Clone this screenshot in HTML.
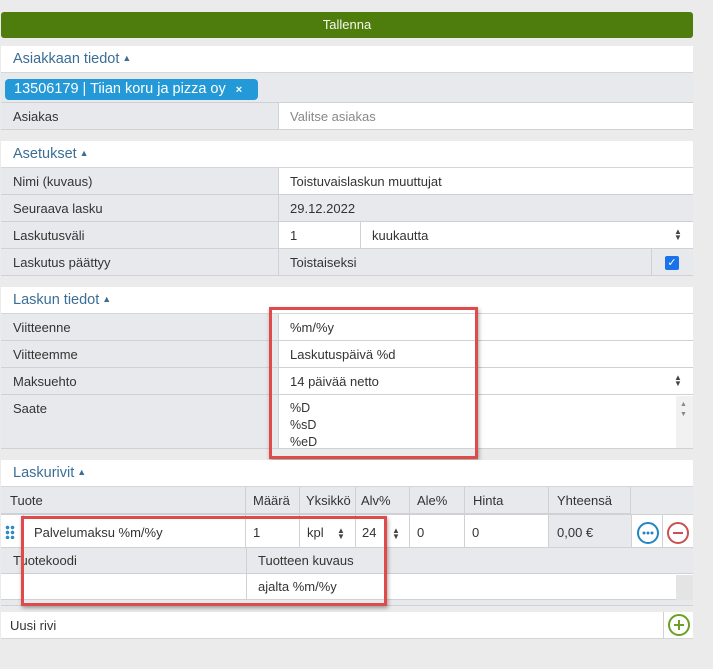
<!DOCTYPE html>
<html><head><meta charset="utf-8"><style>
*{box-sizing:border-box;margin:0;padding:0}
body{width:713px;height:669px;background:#ebebeb;font-family:"Liberation Sans",sans-serif;font-size:13px;color:#333;position:relative;overflow:hidden}
.a{position:absolute}
.btn{left:1px;top:12px;width:692px;height:26px;background:#4f7d0d;border-radius:3px;color:#f4f9e8;text-align:center;line-height:26px;font-size:13px}
.hd{left:1px;width:692px;height:27px;background:#fff;border-bottom:1px solid #d4d6d9;color:#3a6e96;font-size:14.5px;line-height:27px;padding-left:12px}
.hd i{font-style:normal;font-size:9px;position:relative;top:-2px;margin-left:3px}
.l{left:1px;width:278px;height:27px;background:#e7e9ec;border-bottom:1px solid #cfd1d4;border-right:1px solid #cfd1d4;line-height:27px;padding-left:12px}
.v{height:27px;background:#fff;border-bottom:1px solid #cfd1d4;line-height:27px;padding-left:11px}
.g{background:#e7e9ec}
.c{border-right:1px solid #cfd1d4;height:27px;line-height:27px;padding-left:7px;border-bottom:1px solid #cfd1d4}
.red{border:3px solid #df4b4b;box-shadow:1px 2px 4px rgba(0,0,0,.35)}
.ar{font-size:8px;line-height:6px;color:#444}
</style></head><body>
<div class="a btn">Tallenna</div>

<div class="a hd" style="top:46px">Asiakkaan tiedot<i>▲</i></div>
<div class="a" style="left:1px;top:73px;width:692px;height:30px;background:#e7e9ec;border-bottom:1px solid #cfd1d4"></div>
<div class="a" style="left:5px;top:79px;width:253px;height:21px;background:#2399d8;border-radius:4px;color:#fff;font-size:14.5px;line-height:21px;padding-left:9px">13506179 | Tiian koru ja pizza oy <span style="font-size:11px;margin-left:6px;font-weight:bold">×</span></div>
<div class="a l" style="top:103px">Asiakas</div>
<div class="a v" style="left:279px;top:103px;width:414px;color:#888">Valitse asiakas</div>

<div class="a hd" style="top:141px">Asetukset<i>▲</i></div>
<div class="a l" style="top:168px">Nimi (kuvaus)</div>
<div class="a v" style="left:279px;top:168px;width:414px">Toistuvaislaskun muuttujat</div>
<div class="a l" style="top:195px">Seuraava lasku</div>
<div class="a v g" style="left:279px;top:195px;width:414px">29.12.2022</div>
<div class="a l" style="top:222px">Laskutusväli</div>
<div class="a v" style="left:279px;top:222px;width:82px;border-right:1px solid #cfd1d4">1</div>
<div class="a v" style="left:361px;top:222px;width:332px">kuukautta</div>
<div class="a ar" style="left:674px;top:229px">▲<br>▼</div>
<div class="a l" style="top:249px">Laskutus päättyy</div>
<div class="a v g" style="left:279px;top:249px;width:414px">Toistaiseksi</div>
<div class="a" style="left:651px;top:249px;width:1px;height:27px;background:#cfd1d4"></div>
<div class="a" style="left:665px;top:256px;width:14px;height:14px;background:#1a73e8;border-radius:2px;color:#fff;font-size:11px;line-height:14px;text-align:center">✓</div>

<div class="a hd" style="top:287px">Laskun tiedot<i>▲</i></div>
<div class="a l" style="top:314px">Viitteenne</div>
<div class="a v" style="left:279px;top:314px;width:414px">%m/%y</div>
<div class="a l" style="top:341px">Viitteemme</div>
<div class="a v" style="left:279px;top:341px;width:414px">Laskutuspäivä %d</div>
<div class="a l" style="top:368px">Maksuehto</div>
<div class="a v" style="left:279px;top:368px;width:414px">14 päivää netto</div>
<div class="a ar" style="left:674px;top:375px">▲<br>▼</div>
<div class="a l" style="top:395px;height:54px;line-height:27px">Saate</div>
<div class="a v" style="left:279px;top:395px;width:414px;height:54px;line-height:17px;padding-top:5px;font-size:12.5px">%D<br>%sD<br>%eD</div>
<div class="a" style="left:676px;top:396px;width:17px;height:52px;background:#f1f1f1"></div>
<div class="a" style="left:680px;top:400px;font-size:7px;color:#888;line-height:10px">▲<br>▼</div>
<div class="a red" style="left:269px;top:307px;width:209px;height:152px"></div>

<div class="a hd" style="top:460px">Laskurivit<i>▲</i></div>
<div class="a" style="left:1px;top:487px;width:692px;height:28px;background:#e7e9ec;border-bottom:1px solid #cfd1d4"></div>
<div class="a c" style="left:1px;top:487px;width:245px;padding-left:9px">Tuote</div>
<div class="a c" style="left:246px;top:487px;width:54px">Määrä</div>
<div class="a c" style="left:300px;top:487px;width:56px;padding-left:6px">Yksikkö</div>
<div class="a c" style="left:356px;top:487px;width:54px;padding-left:5px">Alv%</div>
<div class="a c" style="left:410px;top:487px;width:55px;padding-left:7px">Ale%</div>
<div class="a c" style="left:465px;top:487px;width:84px;padding-left:8px">Hinta</div>
<div class="a c" style="left:549px;top:487px;width:82px;padding-left:8px">Yhteensä</div>

<div class="a" style="left:1px;top:515px;width:692px;height:33px;background:#fff;border-bottom:1px solid #cfd1d4"></div>
<div class="a" style="left:5px;top:525px;width:10px;height:14px;background:radial-gradient(circle,#2a8bc8 1.6px,transparent 2px) 0 0/5px 5px"></div>
<div class="a c" style="left:23px;top:515px;width:223px;height:33px;line-height:35px;padding-left:10px;border-left:1px solid #cfd1d4">Palvelumaksu %m/%y</div>
<div class="a c" style="left:246px;top:515px;width:54px;height:33px;line-height:35px">1</div>
<div class="a c" style="left:300px;top:515px;width:56px;height:33px;line-height:35px">kpl</div>
<div class="a ar" style="left:337px;top:528px">▲<br>▼</div>
<div class="a c" style="left:356px;top:515px;width:54px;height:33px;line-height:35px;padding-left:6px">24</div>
<div class="a ar" style="left:392px;top:528px">▲<br>▼</div>
<div class="a c" style="left:410px;top:515px;width:55px;height:33px;line-height:35px">0</div>
<div class="a c" style="left:465px;top:515px;width:84px;height:33px;line-height:35px">0</div>
<div class="a c" style="left:549px;top:515px;width:83px;height:33px;line-height:35px;background:#e7e9ec;padding-left:8px">0,00 €</div>
<div class="a" style="left:662px;top:515px;width:1px;height:33px;background:#cfd1d4"></div>
<svg class="a" style="left:636px;top:521px" width="24" height="24"><circle cx="12" cy="12" r="10" fill="none" stroke="#2386c3" stroke-width="2"/><circle cx="8" cy="12" r="1.5" fill="#2386c3"/><circle cx="12" cy="12" r="1.5" fill="#2386c3"/><circle cx="16" cy="12" r="1.5" fill="#2386c3"/></svg>
<svg class="a" style="left:666px;top:521px" width="24" height="24"><circle cx="12" cy="12" r="10" fill="none" stroke="#c8524f" stroke-width="2"/><line x1="7" y1="12" x2="17" y2="12" stroke="#c8524f" stroke-width="2"/></svg>

<div class="a" style="left:1px;top:548px;width:692px;height:26px;background:#e7e9ec;border-bottom:1px solid #cfd1d4"></div>
<div class="a" style="left:13px;top:548px;line-height:25px">Tuotekoodi</div>
<div class="a" style="left:246px;top:548px;width:140px;height:26px;border-left:1px solid #cfd1d4;border-right:1px solid #cfd1d4;padding-left:11px;line-height:25px">Tuotteen kuvaus</div>
<div class="a" style="left:1px;top:574px;width:692px;height:26px;background:#fff;border-bottom:1px solid #cfd1d4"></div>
<div class="a" style="left:246px;top:574px;width:1px;height:26px;background:#cfd1d4"></div>
<div class="a" style="left:258px;top:574px;line-height:25px">ajalta %m/%y</div>
<div class="a" style="left:676px;top:575px;width:17px;height:25px;background:#e4e4e4"></div>
<div class="a" style="left:1px;top:600px;width:692px;height:6px;background:#e7e9ec;border-bottom:1px solid #cfd1d4"></div>
<div class="a red" style="left:21px;top:516px;width:366px;height:90px"></div>

<div class="a" style="left:1px;top:612px;width:692px;height:27px;background:#fff;border-bottom:1px solid #d4d6d9;line-height:27px;padding-left:9px">Uusi rivi</div>
<div class="a" style="left:663px;top:612px;width:1px;height:27px;background:#cfd1d4"></div>
<svg class="a" style="left:667px;top:613px" width="24" height="24"><circle cx="12" cy="12" r="10" fill="none" stroke="#6aa025" stroke-width="2"/><line x1="7" y1="12" x2="17" y2="12" stroke="#6aa025" stroke-width="2"/><line x1="12" y1="7" x2="12" y2="17" stroke="#6aa025" stroke-width="2"/></svg>
</body></html>
